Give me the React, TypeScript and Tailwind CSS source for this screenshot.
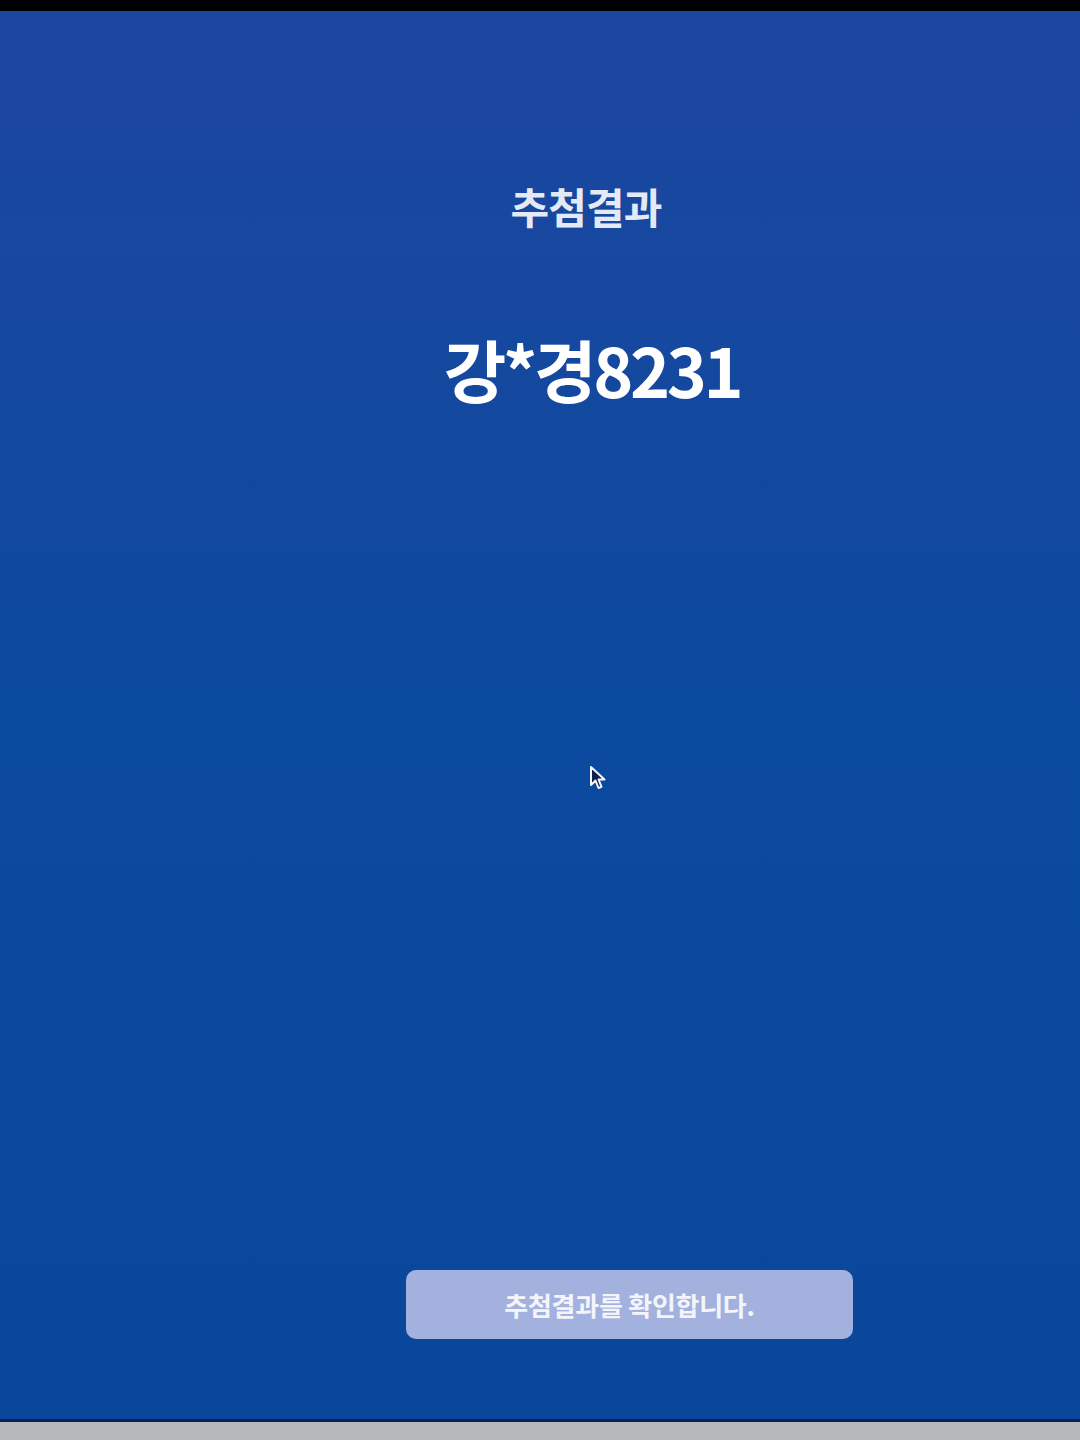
export default function App() {
  return (
    <div
      className="flex h-[1440px] w-full flex-col bg-black"
      style={{ fontFamily: '"Noto Sans CJK KR", "Noto Sans", sans-serif' }}
    >
      {/* top bezel */}
      <div className="h-[11px] bg-black" />

      {/* result screen */}
      <main className="relative flex flex-1 flex-col bg-gradient-to-b from-[#1c46a0] via-[#0a4a9f] to-[#0a479b]">
        <div className="mt-[170px] flex justify-center pl-[92px]">
          <h1 className="text-[42px] font-bold leading-[50px] tracking-[-0.02em] text-[#e4e9f6]">
            추첨결과
          </h1>
        </div>

        <div className="mt-[98px] flex justify-center pl-[104px]">
          <p className="text-[68px] font-bold leading-[80px] tracking-[-0.05em] text-white">
            강*경8231
          </p>
        </div>

        {/* mouse pointer */}
        <svg
          className="absolute left-[589px] top-[754px]"
          width="18"
          height="26"
          viewBox="0 0 18 26"
        >
          <path
            d="M2 2 L2 20 L6.5 15.5 L9.5 23 L12.5 21.8 L9.6 14.5 L15.5 14.5 Z"
            fill="#10204a"
            stroke="#f4f6fb"
            strokeWidth="2"
            strokeLinejoin="round"
          />
        </svg>

        <div className="mb-[80px] mt-auto flex justify-center pl-[179px]">
          <button className="flex h-[69px] w-[447px] items-center justify-center rounded-[10px] bg-[#a3b1de] text-[26px] font-bold tracking-[-0.01em] text-[#f3f5fb]">
            추첨결과를 확인합니다.
          </button>
        </div>
      </main>

      {/* bottom bezel */}
      <div className="h-[3px] bg-[#0a2255]" />
      <div className="h-[18px] bg-[#b6b9ba]" />
    </div>
  );
}
